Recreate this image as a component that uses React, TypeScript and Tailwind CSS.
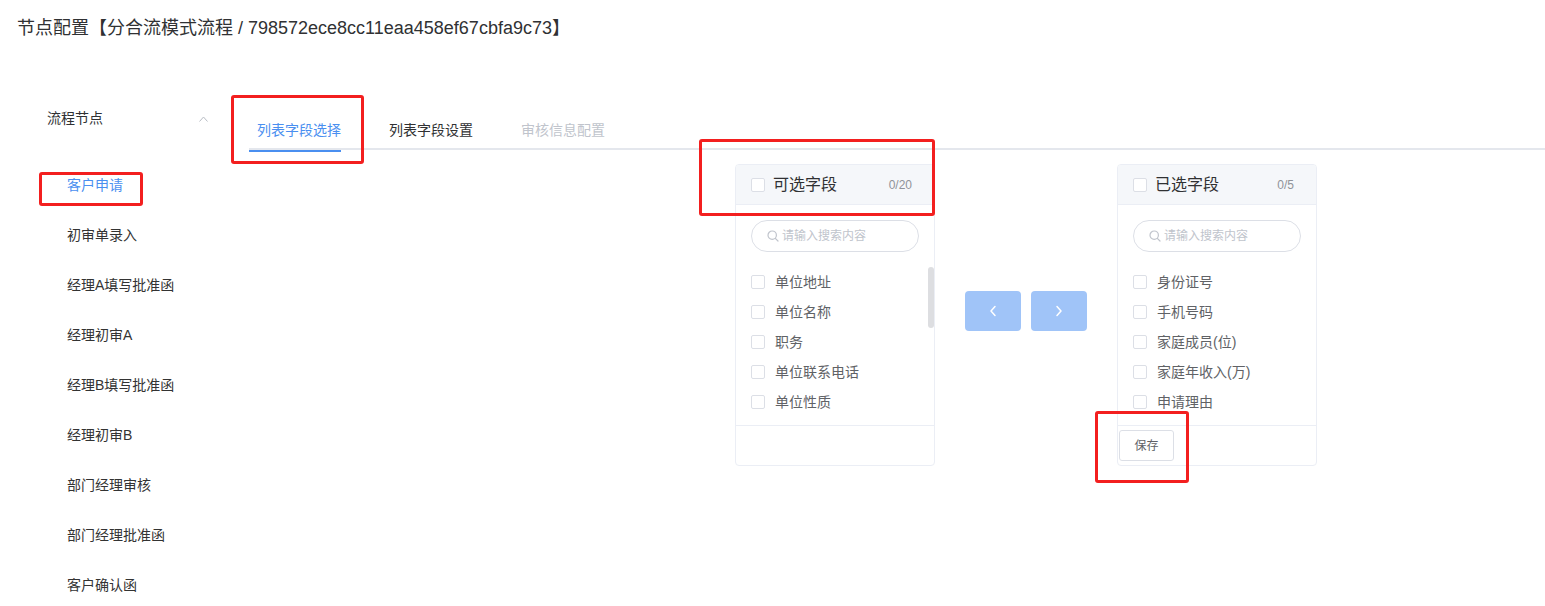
import { useState } from "react";

const FONT = { fontFamily: '"Liberation Sans", "Noto Sans CJK SC", sans-serif' };

const NODES = [
  "客户申请",
  "初审单录入",
  "经理A填写批准函",
  "经理初审A",
  "经理B填写批准函",
  "经理初审B",
  "部门经理审核",
  "部门经理批准函",
  "客户确认函",
];

const TABS = ["列表字段选择", "列表字段设置", "审核信息配置"];

const LEFT_FIELDS = ["单位地址", "单位名称", "职务", "单位联系电话", "单位性质", "工作年限"];

const RIGHT_FIELDS = ["身份证号", "手机号码", "家庭成员(位)", "家庭年收入(万)", "申请理由"];

function Checkbox() {
  return <span className="inline-block w-[14px] h-[14px] shrink-0 rounded-[2px] border border-[#dcdfe6] bg-white" />;
}

function SearchIcon() {
  return (
    <svg width="12" height="12" viewBox="0 0 12 12" fill="none" stroke="#c0c4cc" strokeWidth="1.2">
      <circle cx="5.2" cy="5.2" r="4.2" />
      <path d="M8.3 8.3 L11 11" strokeLinecap="round" />
    </svg>
  );
}

function TransferPanel({
  title,
  count,
  items,
  scroll,
  footer,
}: {
  title: string;
  count: string;
  items: string[];
  scroll?: boolean;
  footer?: React.ReactNode;
}) {
  return (
    <div className="w-[200px] h-[302px] flex flex-col border border-[#ebeef5] rounded-[4px] bg-white overflow-hidden">
      {/* header */}
      <div className="h-[40px] shrink-0 flex items-center bg-[#f5f7fa] border-b border-[#ebeef5] pl-[15px] pr-[22px]">
        <Checkbox />
        <span className="ml-[8px] text-[16px] text-[#303133]">{title}</span>
        <span className="ml-auto text-[12px] text-[#909399]">{count}</span>
      </div>

      {/* body */}
      <div className="flex-1 flex flex-col min-h-0">
        <div className="px-[15px] pt-[15px]">
          <div className="h-[32px] rounded-full border border-[#dcdfe6] flex items-center pl-[15px] gap-[3px]">
            <SearchIcon />
            <span className="text-[12px] text-[#c0c4cc]">请输入搜索内容</span>
          </div>
        </div>
        <div className="relative flex-1 min-h-0 mt-[15px] overflow-hidden">
          {items.map((f) => (
            <div key={f} className="h-[30px] flex items-center pl-[15px]">
              <Checkbox />
              <span className="ml-[10px] text-[14px] text-[#606266]">{f}</span>
            </div>
          ))}
          {scroll && <div className="absolute right-0 top-0 w-[6px] h-[61px] rounded-[3px] bg-[#dddee1]" />}
        </div>
      </div>

      {/* footer */}
      <div className="h-[40px] shrink-0 border-t border-[#ebeef5] flex items-center pl-[1px]">{footer}</div>
    </div>
  );
}

function Arrow({ dir }: { dir: "left" | "right" }) {
  return (
    <button className="w-[56px] h-[40px] rounded-[4px] bg-[#a0c4f8] flex items-center justify-center cursor-not-allowed">
      <svg width="8" height="12" viewBox="0 0 8 12" fill="none" stroke="white" strokeWidth="1.5" strokeLinecap="round" strokeLinejoin="round">
        {dir === "left" ? <path d="M6 1.5 L2 6 L6 10.5" /> : <path d="M2 1.5 L6 6 L2 10.5" />}
      </svg>
    </button>
  );
}

function Mark({ className }: { className: string }) {
  return <div className={`absolute border-[3px] border-[#f31f1f] rounded-[3px] pointer-events-none ${className}`} />;
}

export default function App() {
  const [activeNode, setActiveNode] = useState(0);
  const [activeTab, setActiveTab] = useState(0);

  return (
    <div className="relative w-[1545px] h-[606px] bg-white overflow-hidden" style={FONT}>
      {/* title */}
      <div className="pt-[16px] pl-[17px] h-[40px] text-[18px] leading-[24px] text-[#303133]">
        节点配置【分合流模式流程 / 798572ece8cc11eaa458ef67cbfa9c73】
      </div>

      <div className="flex mt-[50px]">
        {/* sidebar */}
        <div className="w-[249px] shrink-0">
          <div className="h-[56px] flex items-center pl-[47px] pt-[1px] w-[208px]">
            <span className="text-[14px] text-[#303133]">流程节点</span>
            <svg className="ml-auto" width="9" height="6" viewBox="0 0 9 6" fill="none" stroke="#b8bcc4" strokeWidth="1">
              <path d="M0.5 5.5 L4.5 1 L8.5 5.5" />
            </svg>
          </div>
          <div className="mt-[14px]">
            {NODES.map((n, i) => (
              <div
                key={n}
                onClick={() => setActiveNode(i)}
                className={`h-[50px] flex items-center pl-[67px] text-[14px] cursor-pointer ${
                  activeNode === i ? "text-[#4a8ff0]" : "text-[#333333]"
                }`}
              >
                {n}
              </div>
            ))}
          </div>
        </div>

        {/* content */}
        <div className="flex-1 min-w-0">
          <div className="mt-[20px] h-[40px] flex border-b-2 border-[#e4e7ed]">
            {TABS.map((t, i) => (
              <div
                key={t}
                onClick={() => i < 2 && setActiveTab(i)}
                className={`relative h-[40px] flex items-center text-[14px] cursor-pointer ${
                  i === 0 ? "pl-[8px]" : "ml-[48px]"
                } ${i === 2 ? "text-[#c0c4cc]" : activeTab === i ? "text-[#4a8ff0]" : "text-[#303133]"}`}
              >
                {t}
                {activeTab === i && <span className="absolute left-0 right-0 -bottom-[2px] h-[2px] bg-[#4a8ff0]" />}
              </div>
            ))}
          </div>

          <div className="flex items-center mt-[14px] ml-[486px]">
            <TransferPanel title="可选字段" count="0/20" items={LEFT_FIELDS} scroll />
            <div className="flex gap-[10px] mx-[30px] -mt-[8px]">
              <Arrow dir="left" />
              <Arrow dir="right" />
            </div>
            <TransferPanel
              title="已选字段"
              count="0/5"
              items={RIGHT_FIELDS}
              footer={
                <button className="w-[55px] h-[31px] rounded-[3px] border border-[#dcdfe6] bg-white text-[12px] text-[#606266]">
                  保存
                </button>
              }
            />
          </div>
        </div>
      </div>

      {/* annotation boxes */}
      <Mark className="left-[39px] top-[172px] w-[104px] h-[34px]" />
      <Mark className="left-[231px] top-[95px] w-[133px] h-[69px]" />
      <Mark className="left-[699px] top-[139px] w-[236px] h-[77px]" />
      <Mark className="left-[1095px] top-[411px] w-[94px] h-[72px]" />
    </div>
  );
}
